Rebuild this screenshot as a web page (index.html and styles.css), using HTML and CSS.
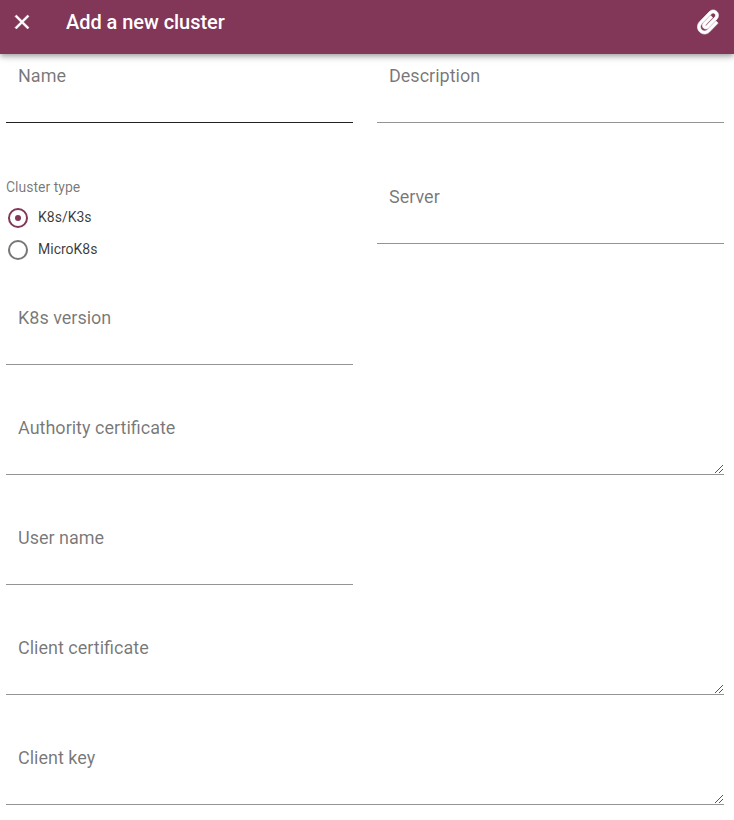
FILE: index.html
```html
<!DOCTYPE html>
<html lang="en">
<head>
<meta charset="utf-8">
<title>Add a new cluster</title>
<link rel="stylesheet" href="styles.css">
</head>
<body>
<header class="toolbar">
  <svg class="close" viewBox="0 0 24 24"><path d="M19 6.41 17.59 5 12 10.59 6.41 5 5 6.41 10.59 12 5 17.59 6.41 19 12 13.41 17.59 19 19 17.59 13.41 12z"/></svg>
  <h1 class="title">Add a new cluster</h1>
  <svg class="clip" viewBox="0 0 448 512"><path d="M43.246 466.142c-58.43-60.289-57.341-157.511 1.386-217.581L254.392 34c44.316-45.332 116.351-45.336 160.671 0 43.89 44.894 43.943 117.329 0 162.276L232.214 383.128c-29.855 30.537-78.633 30.111-107.982-.998-28.275-29.97-27.368-77.473 1.452-106.953l143.743-146.835c6.182-6.314 16.312-6.422 22.626-.241l22.861 22.379c6.315 6.182 6.422 16.312.241 22.626L171.427 319.927c-4.932 5.045-5.236 13.428-.648 18.292 4.372 4.634 11.245 4.711 15.688.165l182.849-186.851c19.613-20.062 19.613-52.725-.011-72.798-19.189-19.627-49.957-19.637-69.154 0L90.39 293.295c-34.763 35.56-35.299 93.12-1.191 128.313 34.01 35.093 88.985 35.137 123.058.286l172.06-175.999c6.182-6.319 16.309-6.431 22.626-.241l22.864 22.379c6.317 6.182 6.422 16.312.241 22.626l-172.06 175.998c-59.576 60.938-155.943 60.216-214.77-.485z"/></svg>
</header>
<main class="form">
  <label class="field hover">Name</label>
  <label class="field">Description</label>
  <fieldset class="group">
    <div class="caption">Cluster type</div>
    <div class="option"><span class="radio checked"></span>K8s/K3s</div>
    <div class="option"><span class="radio"></span>MicroK8s</div>
  </fieldset>
  <label class="field">Server</label>
  <label class="field first">K8s version</label>
  <label class="field wide">Authority certificate<svg class="grip" viewBox="0 0 8 8"><path d="M0 7h1v1H0zM1 6h1v1H1zM2 5h1v1H2zM3 4h1v1H3zM4 3h1v1H4zM5 2h1v1H5zM6 1h1v1H6zM7 0h1v1H7zM4 7h1v1H4zM5 6h1v1H5zM6 5h1v1H6zM7 4h1v1H7z"/></svg></label>
  <label class="field first">User name</label>
  <label class="field wide">Client certificate<svg class="grip" viewBox="0 0 8 8"><path d="M0 7h1v1H0zM1 6h1v1H1zM2 5h1v1H2zM3 4h1v1H3zM4 3h1v1H4zM5 2h1v1H5zM6 1h1v1H6zM7 0h1v1H7zM4 7h1v1H4zM5 6h1v1H5zM6 5h1v1H6zM7 4h1v1H7z"/></svg></label>
  <label class="field wide">Client key<svg class="grip" viewBox="0 0 8 8"><path d="M0 7h1v1H0zM1 6h1v1H1zM2 5h1v1H2zM3 4h1v1H3zM4 3h1v1H4zM5 2h1v1H5zM6 1h1v1H6zM7 0h1v1H7zM4 7h1v1H4zM5 6h1v1H5zM6 5h1v1H6zM7 4h1v1H7z"/></svg></label>
</main>
</body>
</html>
```
FILE: styles.css
```css
* { box-sizing: border-box; }
body {
  margin: 0;
  height: 820px;
  overflow: hidden;
  background: #fff;
  font-family: Roboto, sans-serif;
}
.toolbar {
  position: relative;
  display: flex;
  align-items: center;
  height: 54px;
  padding: 0 15px 10px 10px;
  background: #823658;
  color: #fff;
  box-shadow: 0 2px 4px -1px rgba(0,0,0,.2), 0 4px 5px rgba(0,0,0,.14), 0 1px 10px rgba(0,0,0,.12);
}
.toolbar svg { fill: #fff; }
.close { width: 24px; height: 24px; stroke: #fff; stroke-width: .5; }
.title {
  flex: 1;
  margin: 0 0 0 32px;
  font-size: 20px;
  font-weight: 500;
  line-height: 32px;
  letter-spacing: -.05px;
}
.clip { width: 22px; height: 24px; stroke: #fff; stroke-width: 14; overflow: visible; }
.form {
  display: grid;
  grid-template-columns: 1fr 1fr;
  grid-template-rows: 69px 121px 121px repeat(4, 110px);
  column-gap: 24px;
  align-items: end;
  padding: 0 10px 0 6px;
}
.field {
  display: flex;
  justify-content: space-between;
  height: 60px;
  padding: 0 0 0 12px;
  border-bottom: 1px solid #949494;
  color: rgba(0,0,0,.54);
  font-size: 18px;
  line-height: 25px;
}
.hover { border-color: #212121; }
.first { grid-column: 1; }
.wide { grid-column: 1 / -1; }
.grip {
  align-self: flex-end;
  width: 8px;
  height: 8px;
  margin: 0 1px 1px 0;
  fill: #555;
  shape-rendering: crispEdges;
}
.group {
  align-self: start;
  margin: 0;
  padding: 54px 0 0;
  border: 0;
  font-size: 14px;
  color: rgba(0,0,0,.78);
}
.caption { line-height: 20px; height: 24px; color: rgba(0,0,0,.54); }
.option {
  display: flex;
  align-items: center;
  gap: 10px;
  height: 32px;
  padding-left: 2px;
}
.radio {
  display: grid;
  place-items: center;
  width: 20px;
  height: 20px;
  margin-top: 1px;
  border: 2px solid #777;
  border-radius: 50%;
}
.checked { border-color: #823658; }
.checked::after {
  content: "";
  width: 6px;
  height: 6px;
  border-radius: 50%;
  background: #823658;
}
```
